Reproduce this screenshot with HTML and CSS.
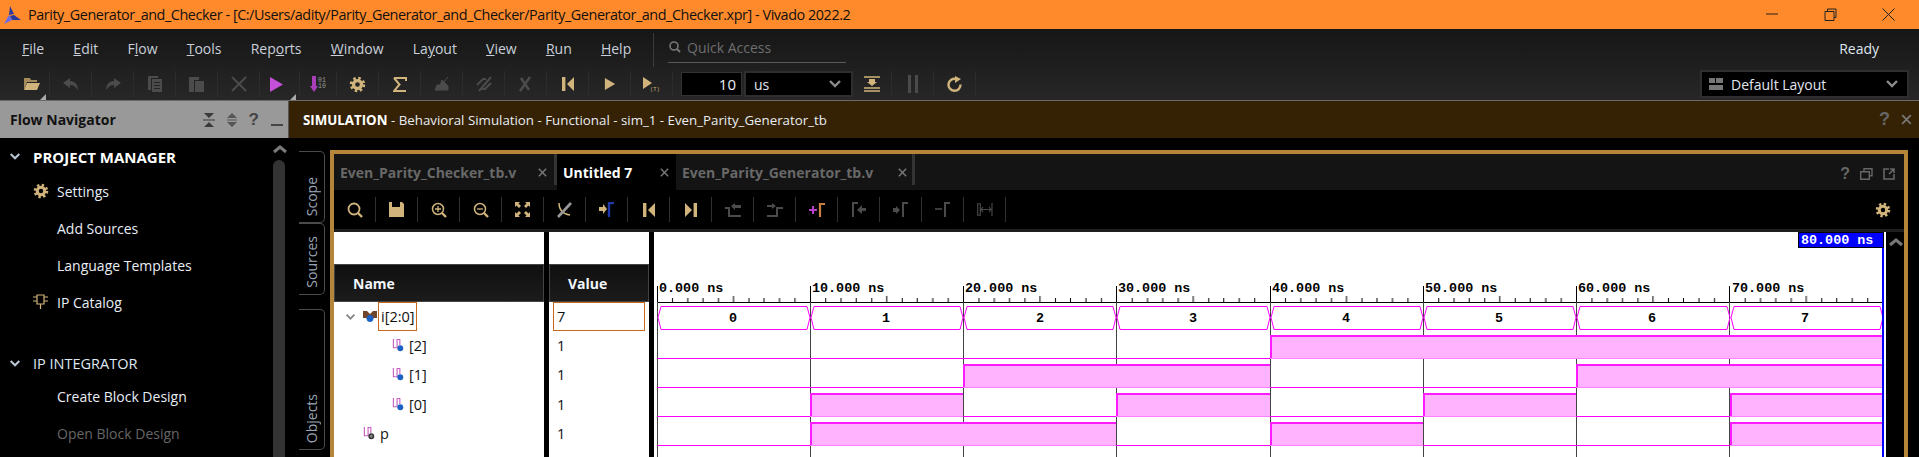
FILE: index.html
```html
<!DOCTYPE html>
<html lang="en">
<head>
    <meta charset="UTF-8">
    <meta name="viewport" content="width=device-width, initial-scale=1.0">
    <title>Parity_Generator_and_Checker - Vivado 2022.2</title>
    <link rel="stylesheet" href="styles.css">
</head>
<body>
    <svg class="defs" width="0" height="0">
        <symbol id="i-gear" viewBox="0 0 18 18">
            <circle cx="9" cy="9" r="6.6" fill="none" stroke="currentColor" stroke-width="3.2" stroke-dasharray="2.6 2.58"/>
            <circle cx="9" cy="9" r="4.2" fill="none" stroke="currentColor" stroke-width="3.4"/>
        </symbol>
        <symbol id="i-close" viewBox="0 0 12 12">
            <path d="M2 2l8 8M10 2l-8 8" fill="none" stroke="currentColor" stroke-width="1.6"/>
        </symbol>
        <symbol id="i-chev" viewBox="0 0 14 10">
            <path d="M2 2l5 5 5-5" fill="none" stroke="currentColor" stroke-width="2.4"/>
        </symbol>
        <symbol id="i-chev-up" viewBox="0 0 14 10">
            <path d="M1 8l6-5 6 5" fill="none" stroke="currentColor" stroke-width="3"/>
        </symbol>
        <symbol id="i-sig" viewBox="0 0 13 14">
            <path d="M1.5 0v9.5h4V.5h3v6" fill="none" stroke="#c45fc4" stroke-width="1.2"/>
            <circle cx="9" cy="10" r="3.2" fill="#1c62c4"/>
        </symbol>
        <symbol id="i-sig-out" viewBox="0 0 13 14">
            <path d="M1.5 0v9.5h4V.5h3v6" fill="none" stroke="#c45fc4" stroke-width="1.2"/>
            <circle cx="9" cy="10" r="2.4" fill="#888" stroke="#333" stroke-width="1.6"/>
        </symbol>
        <symbol id="i-bus" viewBox="0 0 14 12">
            <path d="M0 0h4l3 3 3-3h4v7h-3L7 10 3 7H0z" fill="#73442c"/>
            <circle cx="7" cy="7.5" r="3.4" fill="#1c62c4"/>
        </symbol>
        <symbol id="i-first" viewBox="0 0 14 16">
            <path d="M1 1h3.4v14H1zM13 1v14L6 8z" fill="currentColor"/>
        </symbol>
        <symbol id="i-play" viewBox="0 0 14 16">
            <path d="M1 1l12 7-12 7z" fill="currentColor"/>
        </symbol>
    </svg>

    <header class="titlebar">
        <svg class="app-logo" width="20" height="20" viewBox="0 0 20 20">
            <path d="M8 1l4 8-5 1z" fill="#2a3a9c"/>
            <path d="M12 10l7 5-9 0-2-4z" fill="#2a3a9c"/>
            <path d="M7 10l3 5-8 4z" fill="#6a6cf0"/>
        </svg>
        <span class="title-text">Parity_Generator_and_Checker - [C:/Users/adity/Parity_Generator_and_Checker/Parity_Generator_and_Checker.xpr] - Vivado 2022.2</span>
        <div class="win-btns">
            <span class="win-btn"><svg width="12" height="12" viewBox="0 0 12 12"><path d="M0 6h12" stroke="#222" stroke-width="1"/></svg></span>
            <span class="win-btn"><svg width="13" height="13" viewBox="0 0 13 13"><path d="M3.5 3V1h8.5v8.500h-2M1 3.500h9v9H1z" fill="none" stroke="#222" stroke-width="1"/></svg></span>
            <span class="win-btn"><svg width="13" height="13" viewBox="0 0 13 13"><path d="M.5.5l12 12M12.500.5l-12 12" stroke="#222" stroke-width="1"/></svg></span>
        </div>
    </header>

    <div class="top">
        <div class="menubar">
            <nav class="menus">
                <a><u>F</u>ile</a>
                <a><u>E</u>dit</a>
                <a>F<u>l</u>ow</a>
                <a><u>T</u>ools</a>
                <a>Rep<u>o</u>rts</a>
                <a><u>W</u>indow</a>
                <a>La<u>y</u>out</a>
                <a><u>V</u>iew</a>
                <a><u>R</u>un</a>
                <a><u>H</u>elp</a>
            </nav>
            <div class="quick">
                <div class="quick-field">
                    <svg width="15" height="15" viewBox="0 0 15 15"><circle cx="6" cy="6" r="4" fill="none" stroke="#777" stroke-width="1.600"/><path d="M9 9l3 3" stroke="#777" stroke-width="2"/></svg>
                    <span>Quick Access</span>
                </div>
            </div>
            <span class="ready">Ready</span>
        </div>

        <div class="toolbar">
            <span class="tb tb-folder">
                <svg width="16" height="14" viewBox="0 0 16 14"><path d="M0 1h6l1 2h6v2H3L0 13z" fill="#a58a5c"/><path d="M3 6h13l-3 7H0z" fill="#d1b47c"/></svg>
                <i class="corner"></i>
            </span>
            <span class="tb off"><svg width="16" height="12" viewBox="0 0 16 12"><path d="M7 0L0 5l7 5V7c4 0 6 2 8 5 0-5-3-9-8-9z" fill="currentColor"/></svg></span>
            <span class="tb off"><svg width="16" height="12" viewBox="0 0 16 12"><path d="M9 0l7 5-7 5V7c-4 0-6 2-8 5 0-5 3-9 8-9z" fill="currentColor"/></svg></span>
            <span class="tb off"><svg width="14" height="16" viewBox="0 0 14 16"><path d="M0 0h10v2H3v12H0zM4 3h10v13H4zM6 6v1h6V6zM6 9v1h6V9zM6 12v1h6v-1z" fill="currentColor" fill-rule="evenodd"/></svg></span>
            <span class="tb off"><svg width="15" height="16" viewBox="0 0 15 16"><path d="M0 1h10v3H5v12H0zM6 5h9v11H6z" fill="currentColor"/></svg></span>
            <span class="tb off"><svg width="16" height="16" viewBox="0 0 16 16"><path d="M1 1l14 14M15 1L1 15" stroke="currentColor" stroke-width="2"/></svg></span>
            <span class="tb tb-play">
                <svg width="13" height="15" viewBox="0 0 13 15"><path d="M0 0l13 7.500L0 15z" fill="#c44fd8"/></svg>
                <i class="corner"></i>
            </span>
            <span class="tb tb-dl">
                <svg width="16" height="16" viewBox="0 0 16 16"><path d="M2 0h4v10h2l-4 6-4-6h2z" fill="#a83fb8"/><text x="8" y="6" class="bits">01</text><text x="8" y="12" class="bits">10</text></svg>
            </span>
            <span class="tb tan"><svg width="17" height="17"><use href="#i-gear"/></svg></span>
            <span class="tb tan"><svg width="14" height="15" viewBox="0 0 14 15"><path d="M1 1h12v3M13 14H1l5.500-6.500L1 1" fill="none" stroke="currentColor" stroke-width="2"/></svg></span>
            <span class="tb off"><svg width="16" height="16" viewBox="0 0 16 16"><path d="M1 14h13V10L8 4l-2 5H3zM3 15L14 1" fill="currentColor" stroke="currentColor"/></svg></span>
            <span class="tb off"><svg width="16" height="16" viewBox="0 0 16 16"><path d="M1 9l6-6h3M15 7l-6 6H6M3 15L15 1" fill="none" stroke="currentColor" stroke-width="2"/></svg></span>
            <span class="tb off"><svg width="15" height="16" viewBox="0 0 15 16"><path d="M3 2l8 12M12 1L2 15" fill="none" stroke="currentColor" stroke-width="2.600"/></svg></span>
            <span class="tb tan"><svg width="14" height="16"><use href="#i-first"/></svg></span>
            <span class="tb tan"><svg width="12" height="14"><use href="#i-play"/></svg></span>
            <span class="tb tan"><svg width="20" height="15" viewBox="0 0 20 15"><path d="M1 0l9 6-9 6z" fill="currentColor"/><text x="8" y="14" class="bits bits-t">(T)</text></svg></span>
            <span class="time-input">10</span>
            <span class="dropdown time-unit">us<svg width="14" height="10"><use href="#i-chev"/></svg></span>
            <span class="tb tb-save tan"><svg width="16" height="16" viewBox="0 0 16 16"><path d="M0 1h16M0 12h16M0 15h16" stroke="currentColor" stroke-width="1.400"/><path d="M5 3h6v3h2l-5 4-5-4h2z" fill="currentColor"/></svg></span>
            <span class="tb off"><svg width="10" height="18" viewBox="0 0 10 18"><path d="M0 0h3v18H0zM7 0h3v18H7z" fill="currentColor"/></svg></span>
            <span class="tb tan"><svg width="16" height="17" viewBox="0 0 16 17"><path d="M13.500 8.500A6 6 0 1 1 9 3" fill="none" stroke="currentColor" stroke-width="2.400"/><path d="M8 0l6 3-6 4z" fill="currentColor"/></svg></span>
            <span class="dropdown layout-pick">
                <svg width="14" height="14" viewBox="0 0 14 14"><path d="M0 1h6v5H0zM7 1h7v5H7zM0 8h14v5H0z" fill="#777"/></svg>
                <span class="layout-name">Default Layout</span>
                <svg width="14" height="10"><use href="#i-chev"/></svg>
            </span>
        </div>
    </div>

    <div class="workspace">
        <aside class="flow-nav">
            <div class="flow-head">
                <strong>Flow Navigator</strong>
                <div class="head-icons">
                    <svg width="12" height="14" viewBox="0 0 12 14"><path d="M1 0h10L6 5zM0 6.500h12v1H0zM1 14h10L6 9z" fill="#3a3a3a"/></svg>
                    <svg width="10" height="14" viewBox="0 0 10 14"><path d="M5 0l5 5H0zM0 6.500h10v1H0zM5 14l5-5H0z" fill="#555"/></svg>
                    <b>?</b>
                    <svg width="12" height="14" viewBox="0 0 12 14"><path d="M0 11h12v2H0z" fill="#444"/></svg>
                </div>
            </div>
            <div class="flow-body">
                <ul class="flow-list">
                    <li class="flow-title"><svg width="12" height="9"><use href="#i-chev"/></svg><strong>PROJECT MANAGER</strong></li>
                    <li class="flow-item"><svg class="flow-icon tan" width="16" height="16"><use href="#i-gear"/></svg>Settings</li>
                    <li class="flow-item">Add Sources</li>
                    <li class="flow-item">Language Templates</li>
                    <li class="flow-item"><svg class="flow-icon tan" width="15" height="15" viewBox="0 0 15 15"><path d="M4 1h7v9H4zM0 3h4M0 7h4M11 3h4M11 7h4M7.500 10v5" fill="none" stroke="currentColor" stroke-width="1.200"/></svg>IP Catalog</li>
                    <li class="flow-title flow-gap"><svg width="12" height="9"><use href="#i-chev"/></svg><span>IP INTEGRATOR</span></li>
                    <li class="flow-item">Create Block Design</li>
                    <li class="flow-item dim">Open Block Design</li>
                </ul>
                <div class="flow-scroll">
                    <svg width="14" height="10"><use href="#i-chev-up"/></svg>
                    <div class="flow-thumb"></div>
                </div>
            </div>
        </aside>

        <section class="sim">
            <div class="sim-head">
                <span><strong>SIMULATION</strong> - Behavioral Simulation - Functional - sim_1 - Even_Parity_Generator_tb</span>
                <div class="head-icons">
                    <b>?</b>
                    <svg width="13" height="13"><use href="#i-close"/></svg>
                </div>
            </div>
            <div class="sim-body">
                <div class="side-tabs">
                    <div class="side-tab tab-short"><span>Scope</span></div>
                    <div class="side-tab tab-short"><span>Sources</span></div>
                    <div class="side-tab tab-long"><span>Objects</span></div>
                </div>

                <div class="frame">
                    <div class="tabs">
                        <div class="tab tab-a">Even_Parity_Checker_tb.v<svg width="11" height="11"><use href="#i-close"/></svg></div>
                        <div class="tab tab-b active">Untitled 7<svg width="11" height="11"><use href="#i-close"/></svg></div>
                        <div class="tab tab-c">Even_Parity_Generator_tb.v<svg width="11" height="11"><use href="#i-close"/></svg></div>
                        <div class="tab-icons">
                            <b>?</b>
                            <svg width="13" height="12" viewBox="0 0 13 12"><path d="M4 3V.700h8v7H9.500M.7 3.700h8.600v7.600H.7z" fill="none" stroke="#666" stroke-width="1.400"/></svg>
                            <svg width="12" height="12" viewBox="0 0 12 12"><path d="M6 1H1v10h10V6M7 1h4v4M11 1L6 6" fill="none" stroke="#666" stroke-width="1.600"/></svg>
                        </div>
                    </div>

                    <div class="wave-tools">
                        <span class="wt tan"><svg width="16" height="16" viewBox="0 0 16 16"><circle cx="7" cy="7" r="5.500" fill="none" stroke="currentColor" stroke-width="1.800"/><path d="M11 11l4 4" stroke="currentColor" stroke-width="2.400"/></svg></span>
                        <span class="wt tan"><svg width="15" height="15" viewBox="0 0 15 15"><path d="M0 0h3v5h8V0h2l2 2v13H0z" fill="currentColor"/></svg></span>
                        <span class="wt tan"><svg width="16" height="16" viewBox="0 0 16 16"><circle cx="7" cy="7" r="5.500" fill="none" stroke="currentColor" stroke-width="1.500"/><path d="M11 11l4 4" stroke="currentColor" stroke-width="2.400"/><path d="M4 7h6M7 4v6" stroke="currentColor" stroke-width="1.300"/></svg></span>
                        <span class="wt tan"><svg width="16" height="16" viewBox="0 0 16 16"><circle cx="7" cy="7" r="5.500" fill="none" stroke="currentColor" stroke-width="1.500"/><path d="M11 11l4 4" stroke="currentColor" stroke-width="2.400"/><path d="M4 7h6" stroke="currentColor" stroke-width="1.300"/></svg></span>
                        <span class="wt tan"><svg width="15" height="15" viewBox="0 0 15 15"><path d="M0 0h5L3.500 1.500 6 4 4 6 1.500 3.500 0 5zM15 0v5l-1.500-1.500L11 6 9 4l2.500-2.500L10 0zM0 15v-5l1.500 1.500L4 9l2 2-2.500 2.500L5 15zM15 15h-5l1.500-1.500L9 11l2-2 2.500 2.500L15 10z" fill="currentColor"/></svg></span>
                        <span class="wt"><svg width="15" height="16" viewBox="0 0 15 16"><path d="M2 1c0 7 4 11 11 12" fill="none" stroke="#d1b47c" stroke-width="1.400"/><path d="M14 1L1 15" fill="none" stroke="#999" stroke-width="2.600"/></svg></span>
                        <span class="wt"><svg width="16" height="15" viewBox="0 0 16 15"><path d="M0 5h4V2l4 5-4 5V9H0z" fill="#d1b47c"/><path d="M10 15V1h5" fill="none" stroke="#2238a8" stroke-width="2.400"/></svg></span>
                        <span class="wt tan"><svg width="14" height="16"><use href="#i-first"/></svg></span>
                        <span class="wt tan"><svg width="14" height="16" viewBox="0 0 14 16"><path d="M13 1H9.600v14H13zM1 1v14l7-7z" fill="currentColor"/></svg></span>
                        <span class="wt off"><svg width="16" height="14" viewBox="0 0 16 14"><path d="M0 5h4v8h12" fill="none" stroke="currentColor" stroke-width="2"/><path d="M6 3l4-3v2h6v3h-6v2z" fill="currentColor"/></svg></span>
                        <span class="wt off"><svg width="16" height="14" viewBox="0 0 16 14"><path d="M0 13h10V5h6" fill="none" stroke="currentColor" stroke-width="2"/><path d="M0 2h5V0l4 3-4 3V4H0z" fill="currentColor"/></svg></span>
                        <span class="wt"><svg width="16" height="14" viewBox="0 0 16 14"><path d="M0 6h3V3h2v3h3v2H5v3H3V8H0z" fill="#b840c8"/><path d="M11 14V1h5" fill="none" stroke="#c88040" stroke-width="2.200"/></svg></span>
                        <span class="wt off"><svg width="14" height="15" viewBox="0 0 14 15"><path d="M1 15V1h5" fill="none" stroke="currentColor" stroke-width="2"/><path d="M14 6h-4V3L5 8l5 4V9h4z" fill="currentColor"/></svg></span>
                        <span class="wt off"><svg width="16" height="15" viewBox="0 0 16 15"><path d="M0 6h3V4l4 4-4 4v-2H0z" fill="currentColor"/><path d="M10 15V1h5" fill="none" stroke="currentColor" stroke-width="2"/></svg></span>
                        <span class="wt off"><svg width="16" height="15" viewBox="0 0 16 15"><path d="M0 7h7" stroke="currentColor" stroke-width="1.600"/><path d="M10 15V1h5" fill="none" stroke="currentColor" stroke-width="2"/></svg></span>
                        <span class="wt off"><svg width="16" height="13" viewBox="0 0 16 13"><path d="M.7.700h2.600v11.600H.7zM15 0v13M4 6.500h10M6 4L4 6.500 6 9M12 4l2 2.500L12 9" fill="none" stroke="currentColor" stroke-width="1.100"/></svg></span>
                        <span class="wt-gear tan"><svg width="16" height="16"><use href="#i-gear"/></svg></span>
                    </div>

                    <div class="wave-view">
                        <div class="col col-name">
                            <div class="col-head">Name</div>
                            <div class="sig sig-top">
                                <svg class="sig-chev" width="11" height="8"><use href="#i-chev"/></svg>
                                <svg class="sig-icon sig-bus" width="14" height="12"><use href="#i-bus"/></svg>
                                <span class="sig-label picked">i[2:0]</span>
                            </div>
                            <div class="sig sig-child"><svg class="sig-icon" width="12" height="13"><use href="#i-sig"/></svg><span class="sig-label">[2]</span></div>
                            <div class="sig sig-child"><svg class="sig-icon" width="12" height="13"><use href="#i-sig"/></svg><span class="sig-label">[1]</span></div>
                            <div class="sig sig-child"><svg class="sig-icon" width="12" height="13"><use href="#i-sig"/></svg><span class="sig-label">[0]</span></div>
                            <div class="sig sig-top sig-plain"><svg class="sig-icon" width="12" height="13"><use href="#i-sig-out"/></svg><span class="sig-label">p</span></div>
                        </div>
                        <div class="col col-value">
                            <div class="col-head">Value</div>
                            <div class="val"><span class="val-box">7</span></div>
                            <div class="val">1</div>
                            <div class="val">1</div>
                            <div class="val">1</div>
                            <div class="val">1</div>
                        </div>
                        <div class="wave-canvas">
                            <svg class="wave-svg" width="1232" height="225" viewBox="654 232 1232 225">
                                <defs>
                                    <pattern id="ticks" x="657" y="296" width="153.250" height="6" patternUnits="userSpaceOnUse">
                                        <path d="M15.500 2v4M30.800 2v4M46 2v4M61.500 2v4M76.500 0v6M92 2v4M107 2v4M122.500 2v4M138 2v4" stroke="#000" stroke-width="1"/>
                                    </pattern>
                                </defs>
                                <rect x="657" y="296" width="1226" height="6" fill="url(#ticks)"/>
                                <path class="axis" d="M657 302.500H1883"/>
                                <path class="axis" d="M657.500 286v16M810.500 286v16M963.500 286v16M1116.500 286v16M1270.500 286v16M1423.500 286v16M1576.500 286v16M1729.500 286v16"/>

                                <g class="grid">
                                    <path d="M657.500 302V457M810.500 302V457M963.500 302V457M1116.500 302V457M1270.500 302V457M1423.500 302V457M1576.500 302V457M1729.500 302V457"/>
                                </g>

                                <g class="ruler">
                                    <text x="659" y="292">0.000 ns</text>
                                    <text x="812" y="292">10.000 ns</text>
                                    <text x="965" y="292">20.000 ns</text>
                                    <text x="1118" y="292">30.000 ns</text>
                                    <text x="1272" y="292">40.000 ns</text>
                                    <text x="1425" y="292">50.000 ns</text>
                                    <text x="1578" y="292">60.000 ns</text>
                                    <text x="1732" y="292">70.000 ns</text>
                                </g>

                                <g class="highs">
                                    <rect x="1270" y="335" width="613" height="23"/>
                                    <rect x="963" y="364" width="307" height="23"/>
                                    <rect x="1576" y="364" width="307" height="23"/>
                                    <rect x="810" y="393" width="153" height="23"/>
                                    <rect x="1116" y="393" width="154" height="23"/>
                                    <rect x="1423" y="393" width="153" height="23"/>
                                    <rect x="1730" y="393" width="153" height="23"/>
                                    <rect x="810" y="422" width="306" height="23"/>
                                    <rect x="1270" y="422" width="153" height="23"/>
                                    <rect x="1730" y="422" width="153" height="23"/>
                                </g>

                                <path class="low" d="M657 358.500H1883M657 387.500H1883M657 416.500H1883M657 445.500H1883"/>
                                <path class="low-high" d="M1270 358.500H1883M963 387.500H1270M1576 387.500H1883M810 416.500H963M1116 416.500H1270M1423 416.500H1576M1730 416.500H1883M810 445.500H1116M1270 445.500H1423M1730 445.500H1883"/>
                                <path class="edge" d="M1270 336H1883M1271 335V358M963 365H1270M964 364V387M1576 365H1883M1577 364V387M810 394H963M811 393V416M1116 394H1270M1117 393V416M1423 394H1576M1424 393V416M1730 394H1883M1731 393V416M810 423H1116M811 422V445M1270 423H1423M1271 422V445M1730 423H1883M1731 422V445"/>

                                <g class="bus">
                                    <path d="M658 317.500L661 306.500H807L810 317.500L807 329.500H661Z"/>
                                    <path d="M811 317.500L814 306.500H960L963 317.500L960 329.500H814Z"/>
                                    <path d="M964 317.500L967 306.500H1113L1116 317.500L1113 329.500H967Z"/>
                                    <path d="M1117 317.500L1120 306.500H1267L1270 317.500L1267 329.500H1120Z"/>
                                    <path d="M1271 317.500L1274 306.500H1420L1423 317.500L1420 329.500H1274Z"/>
                                    <path d="M1424 317.500L1427 306.500H1573L1576 317.500L1573 329.500H1427Z"/>
                                    <path d="M1577 317.500L1580 306.500H1727L1730 317.500L1727 329.500H1580Z"/>
                                    <path d="M1731 317.500L1734 306.500H1880L1883 317.500L1880 329.500H1734Z"/>
                                </g>
                                <g class="bus-vals">
                                    <text x="733" y="322">0</text>
                                    <text x="886" y="322">1</text>
                                    <text x="1040" y="322">2</text>
                                    <text x="1193" y="322">3</text>
                                    <text x="1346" y="322">4</text>
                                    <text x="1499" y="322">5</text>
                                    <text x="1652" y="322">6</text>
                                    <text x="1805" y="322">7</text>
                                </g>

                                <rect class="cursor" x="1882" y="232" width="2" height="225"/>
                                <rect class="cursor-tag" x="1798.500" y="232.500" width="85" height="15"/>
                                <text class="cursor-text" x="1801" y="244">80.000 ns</text>
                            </svg>
                        </div>
                        <div class="wave-scroll"><svg width="14" height="10"><use href="#i-chev-up"/></svg></div>
                    </div>
                </div>
            </div>
        </section>
    </div>
</body>
</html>
```

FILE: styles.css
```css
* {
    box-sizing: border-box;
}
html, body {
    margin: 0;
    padding: 0;
    height: 457px;
    overflow: hidden;
}
body {
    display: flex;
    flex-direction: column;
    background: #000;
    color: #e8edf5;
    font-family: "Open Sans", "Liberation Sans", sans-serif;
    font-size: 14px;
}
.defs {
    position: absolute;
}
svg {
    display: block;
    flex-shrink: 0;
}
.tan {
    color: #d1b47c;
}
.off {
    color: #4b4b4b;
}

/* title bar */
.titlebar {
    height: 29px;
    display: flex;
    align-items: center;
    background: #ff8a2b;
    padding-left: 2px;
    color: #111;
    flex-shrink: 0;
}
.title-text {
    margin-left: 6px;
    font-size: 14.4px;
    letter-spacing: -.44px;
    white-space: nowrap;
}
.win-btns {
    margin-left: auto;
    display: flex;
    padding-right: 1px;
}
.win-btn {
    width: 58.500px;
    display: flex;
    justify-content: center;
}

/* menu + main toolbar */
.top {
    height: 72px;
    flex-shrink: 0;
    background: linear-gradient(#161616, #272727);
    border-bottom: 1px solid #6a6a6a;
}
.menubar {
    height: 39px;
    display: flex;
    align-items: center;
}
.menus {
    width: 653px;
    padding: 0 0 0 22px;
    display: flex;
    gap: 29.200px;
    color: #c9d0da;
    font-size: 14px;
}
.quick {
    height: 34px;
    border-left: 1px solid #3a3a3a;
    padding-left: 14px;
    margin-top: 3px;
}
.quick-field {
    width: 178px;
    height: 30px;
    display: flex;
    align-items: center;
    gap: 4px;
    border-bottom: 1px solid #5a5a5a;
    color: #6e6e6e;
    font-size: 14px;
}
.ready {
    margin-left: auto;
    padding-right: 40px;
    font-size: 14px;
    color: #dfe5ee;
}
.toolbar {
    height: 32px;
    display: flex;
    align-items: center;
    padding-left: 8px;
}
.tb {
    position: relative;
    width: 42px;
    height: 26px;
    display: flex;
    align-items: center;
    justify-content: center;
    border-right: 1px solid #2c2c2c;
}
.tb-folder {
    padding-left: 6px;
}
.tb-play {
    width: 40px;
    padding-right: 6px;
}
.tb-dl {
    width: 37px;
}
.tb-save {
    width: 39px;
    margin-left: 0;
}
.corner {
    position: absolute;
    right: 3px;
    bottom: -3px;
    border-style: solid;
    border-width: 0 0 6px 6px;
    border-color: transparent transparent #aaa transparent;
}
.bits {
    font-family: "Liberation Mono", monospace;
    font-size: 6.500px;
    fill: #999;
}
.bits-t {
    font-size: 5.500px;
    fill: #d1b47c;
}
.time-input {
    width: 61px;
    height: 24px;
    margin-left: 8px;
    background: #000;
    border: 1px solid #333;
    text-align: right;
    padding-right: 5px;
    line-height: 22px;
    font-size: 15px;
}
.dropdown {
    height: 26px;
    display: flex;
    align-items: center;
    justify-content: space-between;
    background: #000;
    border: 2px solid #2e2e2e;
    color: #7c7c7c;
}
.dropdown span {
    color: #e0e6f0;
}
.time-unit {
    width: 109px;
    margin-left: 2px;
    padding: 0 9px 0 8px;
    color: #e0e6f0;
    font-size: 14px;
}
.time-unit svg,
.layout-pick svg:last-child {
    color: #8a8a8a;
}
.layout-pick {
    width: 209px;
    height: 28px;
    margin-left: auto;
    margin-right: 10px;
    padding: 0 8px 0 7px;
    font-size: 14px;
}
.layout-name {
    flex: 1;
    margin-left: 8px;
}

/* workspace */
.workspace {
    flex: 1;
    min-height: 0;
    display: flex;
}
.flow-nav {
    width: 289px;
    flex-shrink: 0;
    display: flex;
    flex-direction: column;
}
.flow-head {
    height: 37px;
    flex-shrink: 0;
    display: flex;
    align-items: center;
    justify-content: space-between;
    padding: 0 5px 0 10px;
    background: #999;
    color: #111;
    border-right: 1px solid #555;
}
.flow-head strong {
    font-size: 14px;
}
.head-icons {
    display: flex;
    align-items: center;
    gap: 12px;
}
.head-icons b {
    font-family: "Liberation Sans", sans-serif;
    font-size: 17px;
    color: #444;
}
.flow-body {
    flex: 1;
    display: flex;
    min-height: 0;
}
.flow-list {
    flex: 1;
    list-style: none;
    margin: 0;
    padding: 0;
}
.flow-title {
    height: 35px;
    display: flex;
    align-items: center;
    gap: 12px;
    padding: 2px 0 0 9px;
    color: #b9c4d4;
}
.flow-title strong {
    color: #fff;
    font-size: 15px;
}
.flow-title span {
    color: #dfe8f5;
    font-size: 14.500px;
}
.flow-gap {
    margin: 24px 0 -2px;
}
.flow-item {
    position: relative;
    height: 37px;
    display: flex;
    align-items: center;
    padding-left: 57px;
    color: #e8edf5;
}
.flow-item.dim {
    color: #666;
}
.flow-icon {
    position: absolute;
    left: 33px;
    top: 10px;
}
.flow-scroll {
    width: 19px;
    padding: 6px 0 0 3px;
    color: #7a7a7a;
}
.flow-scroll svg {
    margin-bottom: 6px;
}
.flow-thumb {
    width: 12px;
    height: 297px;
    border-radius: 6px 6px 0 0;
    background: #333;
}

.sim {
    flex: 1;
    min-width: 0;
    display: flex;
    flex-direction: column;
}
.sim-head {
    height: 37px;
    flex-shrink: 0;
    display: flex;
    align-items: center;
    justify-content: space-between;
    padding: 0 6px 0 14px;
    background: #352103;
    color: #e8edf5;
    font-size: 13.300px;
}
.sim-head strong {
    color: #fff;
}
.sim-head .head-icons {
    gap: 10px;
    color: #777;
}
.sim-head .head-icons b {
    color: #666;
    font-size: 18px;
}
.sim-body {
    flex: 1;
    min-height: 0;
    display: flex;
}
.side-tabs {
    width: 41px;
    flex-shrink: 0;
    padding: 13px 0 0 10px;
}
.side-tab {
    width: 26px;
    display: flex;
    justify-content: center;
    align-items: flex-end;
    padding-bottom: 6px;
    border: 1px solid #4a4a4a;
    border-left: none;
    border-radius: 0 5px 5px 0;
    color: #9aa4b4;
    font-size: 14px;
}
.side-tab span {
    writing-mode: vertical-rl;
    transform: rotate(180deg);
}
.tab-short {
    height: 72px;
}
.tab-long {
    height: 141px;
    margin-top: 14px;
}

/* gold frame */
.frame {
    flex: 1;
    min-width: 0;
    margin: 12px 11px 0 0;
    display: flex;
    flex-direction: column;
    border: 4px solid #b5853a;
    border-bottom: none;
}
.tabs {
    height: 36px;
    flex-shrink: 0;
    display: flex;
    background: #141414;
}
.tab {
    position: relative;
    height: 36px;
    display: flex;
    align-items: center;
    justify-content: space-between;
    padding: 0 9px 0 6px;
    font-weight: 700;
    font-size: 14px;
    color: #686868;
}
.tab::after {
    content: "";
    position: absolute;
    right: 0;
    top: 0;
    width: 3px;
    height: 31px;
    background: #333;
}
.tab svg {
    color: #777;
}
.tab-a {
    width: 223px;
}
.tab-b {
    width: 119px;
    padding-right: 6px;
}
.tab-b::after {
    display: none;
}
.tab-c {
    width: 239px;
    padding-right: 7px;
}
.tab.active {
    background: #000;
    color: #fff;
}
.tab-icons {
    margin-left: auto;
    display: flex;
    align-items: center;
    gap: 10px;
    padding: 4px 9px 0 0;
}
.tab-icons b {
    font-family: "Liberation Sans", sans-serif;
    font-size: 16px;
    color: #666;
}
.wave-tools {
    height: 42px;
    flex-shrink: 0;
    display: flex;
    align-items: center;
    background: #000;
    border-bottom: 3px solid #1e1e1e;
    padding-left: 0;
}
.wt {
    width: 42px;
    height: 25px;
    display: flex;
    align-items: center;
    justify-content: center;
    border-right: 1px solid #303030;
}
.wt-gear {
    margin-left: auto;
    margin-right: 13px;
}
.wave-view {
    flex: 1;
    min-height: 0;
    display: flex;
    background: #fff;
}
.col {
    padding-top: 32px;
    color: #111;
}
.col-name {
    width: 210px;
}
.col-value {
    width: 110px;
    padding-left: 0;
    border-left: 5px solid #000;
    border-right: 5px solid #000;
}
.col-head {
    height: 38px;
    display: flex;
    align-items: center;
    padding-left: 18px;
    background: linear-gradient(#101010, #1b1b1b);
    border: 1px solid #444;
    color: #f2f6fc;
    font-weight: 700;
    font-size: 14px;
}
.sig,
.val {
    height: 29.200px;
    display: flex;
    align-items: center;
    font-size: 14.500px;
}
.sig-top {
    padding-left: 29px;
}
.sig-chev {
    margin-left: -18px;
    margin-right: 7px;
    color: #888;
}
.sig-icon {
    margin-right: 4px;
}
.sig-bus {
    margin-right: 1px;
}
.sig-child {
    padding-left: 58px;
}
.sig-child .sig-icon {
    margin-right: 5px;
}
.sig-plain .sig-icon {
    margin-right: 5px;
}
.sig-label.picked {
    height: 29px;
    width: 39px;
    padding-left: 2px;
    line-height: 27px;
    border: 1px solid #c8691e;
}
.val {
    padding-left: 8px;
}
.val-box {
    width: 92px;
    height: 29px;
    margin-left: -4px;
    padding-left: 3px;
    line-height: 27px;
    border: 1px solid #c8691e;
}
.wave-canvas {
    width: 1232px;
    flex-shrink: 0;
    overflow: hidden;
}
.wave-scroll {
    flex: 1;
    background: #000;
    padding: 5px 0 0 3px;
    color: #777;
}

/* waveform */
.wave-svg text {
    font-family: "Liberation Mono", monospace;
    font-weight: 700;
    font-size: 13.400px;
}
.axis {
    stroke: #000;
    stroke-width: 1;
    fill: none;
}
.grid path {
    stroke: #444;
    stroke-width: 1;
    fill: none;
}
.highs rect {
    fill: #ffb3ff;
}
.low {
    stroke: #ff00ff;
    stroke-width: 1;
    fill: none;
}
.low-high {
    stroke: #ff80ff;
    stroke-width: 1;
    fill: none;
}
.edge {
    stroke: #ff00ff;
    stroke-width: 2;
    fill: none;
    opacity: .85;
}
.bus path {
    stroke: #ff00ff;
    stroke-width: 1;
    fill: none;
}
.bus-vals text {
    text-anchor: middle;
}
.cursor {
    fill: #0000ff;
}
.cursor-tag {
    fill: #0000ff;
    stroke: #000;
    stroke-width: 1;
}
.wave-svg .cursor-text {
    fill: #fff;
}
```
